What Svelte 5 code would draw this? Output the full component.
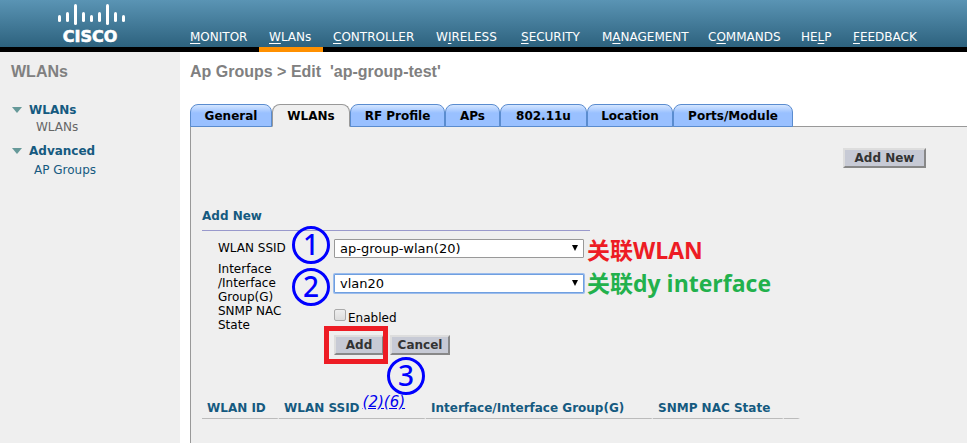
<script>
  const nav = [
    ['', 'M', 'ONITOR'],
    ['', 'W', 'LANs'],
    ['', 'C', 'ONTROLLER'],
    ['W', 'I', 'RELESS'],
    ['', 'S', 'ECURITY'],
    ['M', 'A', 'NAGEMENT'],
    ['C', 'O', 'MMANDS'],
    ['HE', 'L', 'P'],
    ['', 'F', 'EEDBACK']
  ];
  const tabs = ['General', 'WLANs', 'RF Profile', 'APs', '802.11u', 'Location', 'Ports/Module'];
  let activeTab = $state('WLANs');
  let nac = $state(false);
  // x, top and height of each bar in the logo
  const bars = [
    [1, 11, 7], [9, 8, 10], [17, 0, 21], [25, 8, 10], [33, 11, 7],
    [41, 8, 10], [49, 0, 21], [57, 8, 10], [65, 11, 7]
  ];
</script>

<div class="page">
  <header>
    <a class="logo" href="#home" aria-label="Cisco home">
      <svg width="70" height="42" viewBox="0 0 70 42">
        {#each bars as [x, y, h]}
          <rect x={x} y={y} width="3" height={h} rx="1.5" fill="#fff" />
        {/each}
        <text x="33" y="38" text-anchor="middle">CISCO</text>
      </svg>
    </a>
    <nav>
      {#each nav as [a, key, b], i}
        <a href="#nav-{i}" class:current={i === 1}>{a}<u>{key}</u>{b}</a>
      {/each}
    </nav>
  </header>

  <div class="body">
    <aside>
      <h2>WLANs</h2>
      <a class="group" href="#wlans">
        <svg width="10" height="6" viewBox="0 0 10 6"><path d="M0 0H10L5 6Z" fill="#669999" /></svg>WLANs
      </a>
      <a class="item here" href="#wlans-list">WLANs</a>
      <a class="group second" href="#advanced">
        <svg width="10" height="6" viewBox="0 0 10 6"><path d="M0 0H10L5 6Z" fill="#669999" /></svg>Advanced
      </a>
      <a class="item" href="#ap-groups">AP Groups</a>
    </aside>

    <main>
      <h1>Ap Groups &gt; Edit&nbsp; 'ap-group-test'</h1>
      <div class="tabs" role="tablist">
        {#each tabs as tab}
          <button role="tab" aria-selected={tab === activeTab} class:active={tab === activeTab} onclick={() => (activeTab = tab)}>{tab}</button>
        {/each}
      </div>

      <section class="panel">
        <div class="actions"><button class="btn wide">Add New</button></div>

        <h3>Add New</h3>
        <form onsubmit={(e) => e.preventDefault()}>
          <label class="name" for="ssid">WLAN SSID</label>
          <div class="pick">
            <select id="ssid"><option>ap-group-wlan(20)</option></select>
            <svg width="6" height="6" viewBox="0 0 6 6"><path d="M0 0H6L3 6Z" /></svg>
          </div>
          <label class="name" for="iface">Interface<br />/Interface<br />Group(G)</label>
          <div class="pick focus">
            <select id="iface"><option>vlan20</option></select>
            <svg width="6" height="6" viewBox="0 0 6 6"><path d="M0 0H6L3 6Z" /></svg>
          </div>
          <span class="name">SNMP NAC<br />State</span>
          <label class="check"><input type="checkbox" bind:checked={nac} />Enabled</label>
          <div class="buttons">
            <button class="btn add">Add</button>
            <button class="btn cancel" type="button">Cancel</button>
          </div>
        </form>

        <table>
          <thead>
            <tr>
              <th class="c1">WLAN ID</th>
              <th class="c2">WLAN SSID<a href="#notes">(2)(6)</a></th>
              <th class="c3">Interface/Interface Group(G)</th>
              <th class="c4">SNMP NAC State</th>
              <th class="c5"></th>
            </tr>
          </thead>
        </table>

        <span class="step one">1</span>
        <span class="step two">2</span>
        <span class="step three">3</span>
        <span class="frame"></span>
        <span class="note red">关联WLAN</span>
        <span class="note green">关联dy interface</span>
      </section>
    </main>
  </div>
</div>

<style>
  :global(body) { margin: 0; background: #fff; }
  .page {
    min-height: 100vh;
    display: flex;
    flex-direction: column;
    overflow: hidden;
    font: 12px/14px "DejaVu Sans", Verdana, sans-serif;
    color: #000;
  }
  a { text-decoration: none; }
  button, select, input { font-family: inherit; margin: 0; }

  header {
    box-sizing: border-box;
    height: 52px;
    display: flex;
    background: linear-gradient(#5a94b4, #2d627e);
    background-clip: padding-box;
    border-bottom: 5px solid #000;
  }
  .logo { width: 123px; padding: 4px 0 0 57px; flex: none; }
  .logo svg { display: block; }
  .logo text { font: bold 16px "DejaVu Sans", sans-serif; fill: #fff; stroke: #fff; stroke-width: 0.6px; }
  nav {
    display: grid;
    grid-template-columns: 79px 64px 103px 85px 81px 106px 93px 52px 85px;
    height: 52px;
  }
  nav a {
    box-sizing: border-box;
    padding: 30px 0 0 10px;
    color: #fff;
    border-bottom: 5px solid transparent;
    white-space: nowrap;
  }
  nav a.current { border-color: #ff9000; }
  u { text-underline-offset: 2px; text-decoration-skip-ink: none; }

  .body { flex: 1; display: flex; }
  aside {
    box-sizing: border-box;
    width: 180px;
    flex: none;
    padding: 10px 0 0 11px;
    background: #efefef;
  }
  h1, h2 {
    margin: 0;
    font: bold 16px/20px "Liberation Sans", Arial, sans-serif;
    color: #808080;
  }
  .group {
    display: flex;
    align-items: center;
    gap: 7px;
    margin-top: 20px;
    padding-left: 1px;
    font-weight: bold;
    line-height: 16px;
    color: #155a80;
  }
  .group.second { margin-top: 7px; }
  .item { display: block; padding-left: 23px; line-height: 22px; color: #155a80; }
  .item.here { padding-left: 25px; line-height: 18px; color: #666; }

  main { flex: 1; display: flex; flex-direction: column; padding: 10px 0 0 10px; min-width: 0; }
  .tabs {
    position: relative;
    z-index: 1;
    display: grid;
    grid-template-columns: 82px 78px 95px 55px 87px 86px 120px;
    margin: 22px 0 -1px;
  }
  .tabs button {
    height: 23px;
    padding: 0;
    border: 1px solid #5a8ccf;
    border-radius: 8px 8px 0 0;
    background: linear-gradient(#d5e6ff, #99c0ff 8px);
    font-size: 12px;
    font-weight: bold;
    color: #000;
  }
  .tabs .active { background: #efefef; border-color: #999; border-bottom-color: #efefef; }

  .panel {
    position: relative;
    flex: 1;
    border: solid #999;
    border-width: 1px 0 0 1px;
    padding: 21px 0 0 11px;
    background: #efefef;
  }
  .actions { display: flex; justify-content: flex-end; padding-right: 41px; }
  .btn {
    height: 20px;
    padding: 0;
    border: 2px solid;
    border-color: #ddd #888 #888 #ddd;
    background: #c7cad5;
    color: #333;
    font-size: 12px;
    font-weight: bold;
    line-height: 16px;
  }
  .wide { width: 83px; }
  .add { width: 50px; }
  .cancel { width: 60px; }
  h3 {
    width: 388px;
    margin: 39px 0 0;
    padding-bottom: 5px;
    border-bottom: 1px solid #9999cc;
    font-size: 12px;
    line-height: 18px;
    color: #155a80;
  }
  form {
    display: grid;
    grid-template-columns: 116px 250px;
    grid-template-rows: 28px 42px 28px auto;
    align-items: center;
    padding: 3px 0 0 16px;
  }
  .pick { position: relative; display: flex; }
  select {
    width: 100%;
    height: 19px;
    padding: 0 5px;
    border: 1px solid #999;
    border-radius: 1px;
    background: #fff;
    color: #000;
    font-size: 13px;
    appearance: none;
  }
  .focus select { border-color: #6f9fe0; box-shadow: 0 0 0 1px #9bbcec; outline: none; }
  .pick svg { position: absolute; right: 6px; top: 6px; pointer-events: none; }
  .check { display: flex; align-items: flex-start; gap: 2px; line-height: 18px; }
  .check input {
    appearance: none;
    width: 12px;
    height: 12px;
    border: 1px solid #aaa;
    border-radius: 2px;
    background: linear-gradient(#eee, #ddd);
  }
  .buttons { grid-column: 2; display: flex; gap: 6px; padding-top: 3px; }

  table { margin-top: 41px; width: 598px; border-spacing: 0; table-layout: fixed; }
  th {
    height: 23px;
    padding: 1px 0 0 5px;
    text-align: left;
    white-space: nowrap;
    color: #155a80;
    border-bottom: 1px solid #bbb;
    border-right: 2px solid #efefef;
    box-sizing: border-box;
  }
  th a {
    position: relative;
    bottom: 5px;
    margin-left: 3px;
    font-size: 15px;
    line-height: 12px;
    font-weight: normal;
    font-style: italic;
    color: #0000ee;
    text-decoration: underline;
  }
  .c1 { width: 77px; }
  .c2 { width: 147px; }
  .c3 { width: 227px; }
  .c4 { width: 131px; }
  .c5 { width: 16px; }

  .step {
    position: absolute;
    box-sizing: border-box;
    width: 38px;
    height: 38px;
    border: 3px solid #00f;
    border-radius: 50%;
    font: 500 28px/31px "Noto Sans", sans-serif;
    text-align: center;
    color: #00f;
  }
  .one { left: 101px; top: 99px; }
  .two { left: 101px; top: 141px; }
  .three { left: 196px; top: 230px; }
  .frame {
    position: absolute;
    box-sizing: border-box;
    left: 133px;
    top: 199px;
    width: 64px;
    height: 38px;
    border: 5px solid #ed1c24;
    pointer-events: none;
  }
  .note {
    position: absolute;
    left: 396px;
    font: bold 23px/28px "Open Sans", "Noto Sans CJK SC", sans-serif;
    white-space: nowrap;
  }
  .red { top: 109px; color: #ed1c24; }
  .green { top: 142px; color: #22b14c; }
</style>
